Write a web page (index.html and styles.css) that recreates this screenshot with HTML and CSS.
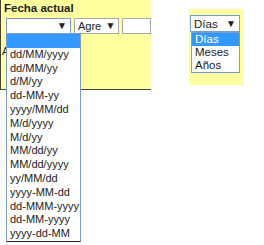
FILE: index.html
```html
<!DOCTYPE html>
<html lang="es">
<head>
    <meta charset="UTF-8">
    <meta name="viewport" content="width=device-width, initial-scale=1.0">
    <link rel="stylesheet" href="styles.css">
</head>
<body>
<div class="page">
    <div class="panel">
        <div class="label">Fecha actual</div>
        <div class="row">
            <div class="dropdown">
                <div class="select focused wide"><span></span><span class="arrow">&#9660;</span></div>
                <div class="listbox formats">
                    <div class="option selected">&nbsp;</div>
                    <div class="option">dd/MM/yyyy</div>
                    <div class="option">dd/MM/yy</div>
                    <div class="option">d/M/yy</div>
                    <div class="option">dd-MM-yy</div>
                    <div class="option">yyyy/MM/dd</div>
                    <div class="option">M/d/yyyy</div>
                    <div class="option">M/d/yy</div>
                    <div class="option">MM/dd/yy</div>
                    <div class="option">MM/dd/yyyy</div>
                    <div class="option">yy/MM/dd</div>
                    <div class="option">yyyy-MM-dd</div>
                    <div class="option">dd-MMM-yyyy</div>
                    <div class="option">dd-MM-yyyy</div>
                    <div class="option">yyyy-dd-MM</div>
                </div>
            </div>
            <div class="select small"><span>Agre</span><span class="arrow">&#9660;</span></div>
            <div class="textbox"></div>
        </div>
        <div class="note">Agregar</div>
    </div>

    <div class="panel-units">
        <div class="dropdown">
            <div class="select focused units"><span>Días</span><span class="arrow">&#9660;</span></div>
            <div class="listbox units-list">
                <div class="option selected">Días</div>
                <div class="option">Meses</div>
                <div class="option">Años</div>
            </div>
        </div>
    </div>
</div>
</body>
</html>
```

FILE: styles.css
```css
html {
    height: 100%;
}

body {
    height: 100%;
    margin: 0;
    font-family: "Liberation Sans", Arial, sans-serif;
    font-size: 11px;
    color: #222;
    background-color: #ffffff;
}

.page {
    display: flex;
    align-items: flex-start;
    min-height: 245px;
}

.panel {
    width: 148px;
    height: 89px;
    background-color: #ffffa0;
    border-left: 1px solid #444;
    border-bottom: 1px solid #444;
    padding-left: 2px;
}

.label {
    font-weight: bold;
    font-size: 11.5px;
    line-height: 14px;
    padding-top: 1px;
    padding-left: 1px;
    color: #222;
}

.row {
    display: flex;
    align-items: flex-start;
    gap: 3px;
    margin-top: 3px;
    padding-left: 3px;
}

.dropdown {
    position: relative;
}

.select {
    box-sizing: border-box;
    height: 16px;
    display: flex;
    justify-content: space-between;
    align-items: center;
    background-color: #fff;
    border: 1px solid #a9a9a9;
    padding: 0 3px 0 3px;
    line-height: 14px;
}

.select.focused {
    border-color: #7a9cd3;
}

.select.wide {
    width: 65px;
}

.select.small {
    width: 46px;
}

.select.units {
    width: 50px;
    height: 17px;
    font-size: 11.5px;
}

.arrow {
    font-size: 10px;
    color: #222;
}

.textbox {
    box-sizing: border-box;
    width: 29px;
    height: 16px;
    background-color: #fff;
    border: 1px solid #a9a9a9;
}

.note {
    margin-top: 10px;
    margin-left: -1px;
    line-height: 14px;
}

/* open dropdown lists */
.listbox {
    position: absolute;
    left: 0;
    background-color: #fff;
    border: 1px solid #7a9cd3;
    z-index: 5;
}

.formats {
    top: 15px;
    width: 73px;
    border-bottom-color: #222;
}

.formats .option {
    line-height: 13.8px;
    height: 13.8px;
}

.units-list {
    top: 17px;
    left: 1px;
    width: 47px;
}

.option {
    padding-left: 3px;
    line-height: 13px;
    height: 13px;
    font-size: 11.5px;
    white-space: nowrap;
    color: #222;
}

.formats .option {
    font-size: 11px;
}

.option.selected {
    background-color: #3399ff;
    color: #fff;
}

.panel-units {
    width: 55px;
    height: 76px;
    margin-left: 38px;
    margin-top: 9px;
    padding-top: 6px;
    box-sizing: border-box;
    padding-left: 1px;
    background-color: #ffffa0;
}
```
